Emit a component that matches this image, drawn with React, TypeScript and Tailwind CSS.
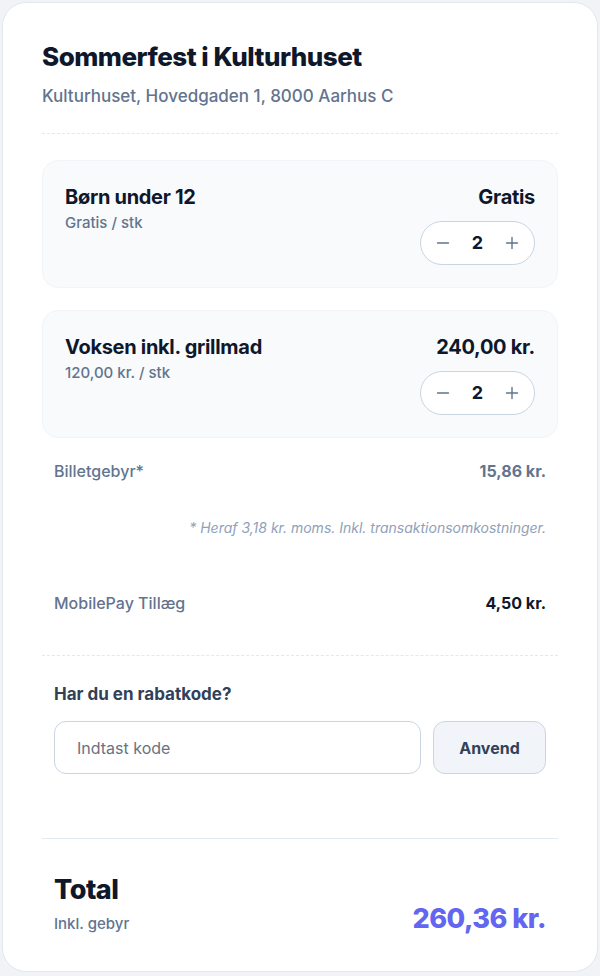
import React, { useState } from 'react';

type Ticket = {
  name: string;
  unit: string;
  total: string;
  qty: number;
};

const tickets: Ticket[] = [
  { name: 'Børn under 12', unit: 'Gratis / stk', total: 'Gratis', qty: 2 },
  { name: 'Voksen inkl. grillmad', unit: '120,00 kr. / stk', total: '240,00 kr.', qty: 2 },
];

function Stepper({ value }: { value: number }) {
  return (
    <div className="flex items-center justify-between w-[115px] h-[44px] px-[14px] bg-white border border-slate-300 rounded-full">
      <svg width="16" height="16" viewBox="0 0 16 16" className="text-slate-500">
        <path d="M2.5 8h11" stroke="currentColor" strokeWidth="1.4" strokeLinecap="round" />
      </svg>
      <span className="text-[18px] font-bold text-slate-900">{value}</span>
      <svg width="16" height="16" viewBox="0 0 16 16" className="text-slate-500">
        <path d="M2.5 8h11M8 2.5v11" stroke="currentColor" strokeWidth="1.4" strokeLinecap="round" />
      </svg>
    </div>
  );
}

export default function App() {
  const [code, setCode] = useState('');

  return (
    <div className="min-h-screen bg-[#f1f3f7] p-[2px] font-['Inter','Noto_Sans',sans-serif]">
      <div className="bg-white rounded-[24px] border border-slate-200 px-[39px] pt-[38px] pb-[44px] h-[970px]">
        {/* Event header */}
        <h1 className="text-[26px] leading-[32px] font-extrabold text-slate-900 tracking-[-0.5px]">
          Sommerfest i Kulturhuset
        </h1>
        <p className="mt-[11px] text-[17px] text-slate-500 font-medium">
          Kulturhuset, Hovedgaden 1, 8000 Aarhus C
        </p>

        <div className="mt-[23px] border-t border-dashed border-slate-200" />

        {/* Tickets */}
        <div className="mt-[26px] flex flex-col gap-[22px]">
          {tickets.map(t => (
            <div
              key={t.name}
              className="bg-slate-50 border border-slate-100 rounded-[16px] px-[22px] pt-[22px] pb-[22px] flex justify-between"
            >
              <div>
                <div className="text-[20px] leading-[28px] font-bold text-slate-900 tracking-[-0.3px]">{t.name}</div>
                <div className="text-[15px] text-slate-500 font-medium mt-[1px]">{t.unit}</div>
              </div>
              <div className="flex flex-col items-end gap-[10px]">
                <div className="text-[20px] leading-[28px] font-bold text-slate-900 tracking-[-0.3px]">{t.total}</div>
                <Stepper value={t.qty} />
              </div>
            </div>
          ))}
        </div>

        {/* Fees */}
        <div className="px-[12px]">
          <div className="mt-[21px] flex justify-between items-center h-[24px]">
            <span className="text-[16px] font-medium text-slate-500">Billetgebyr*</span>
            <span className="text-[16px] font-bold text-slate-500">15,86 kr.</span>
          </div>
          <p className="mt-[34px] text-right text-[14px] italic text-slate-400">
            * Heraf 3,18 kr. moms. Inkl. transaktionsomkostninger.
          </p>
          <div className="mt-[53px] flex justify-between items-center h-[24px]">
            <span className="text-[16px] font-medium text-slate-500">MobilePay Tillæg</span>
            <span className="text-[16px] font-bold text-slate-900">4,50 kr.</span>
          </div>
        </div>

        <div className="mt-[40px] border-t border-dashed border-slate-200" />

        {/* Discount code */}
        <div className="px-[12px] pt-[26px]">
          <label htmlFor="code" className="block text-[17px] font-bold text-slate-700">
            Har du en rabatkode?
          </label>
          <div className="mt-[14px] flex gap-[12px]">
            <input
              id="code"
              value={code}
              onChange={e => setCode(e.target.value)}
              placeholder="Indtast kode"
              className="flex-1 h-[53px] rounded-[12px] border border-slate-300 bg-white px-[22px] text-[16px] text-slate-800 placeholder:text-gray-500 focus:outline-none"
            />
            <button className="w-[113px] h-[53px] rounded-[12px] border border-slate-300 bg-slate-100 text-[16px] font-bold text-slate-700">
              Anvend
            </button>
          </div>
        </div>

        <div className="mt-[64px] border-t border-slate-200" />

        {/* Total */}
        <div className="px-[12px] pt-[34px] flex justify-between items-end">
          <div>
            <div className="text-[27px] leading-[34px] font-extrabold text-slate-900 tracking-[-0.5px]">Total</div>
            <div className="mt-[6px] text-[15px] font-medium text-slate-500">Inkl. gebyr</div>
          </div>
          <div className="text-[27px] font-extrabold text-[#6366f1] tracking-[-0.5px] leading-[34px]">260,36 kr.</div>
        </div>
      </div>
    </div>
  );
}
